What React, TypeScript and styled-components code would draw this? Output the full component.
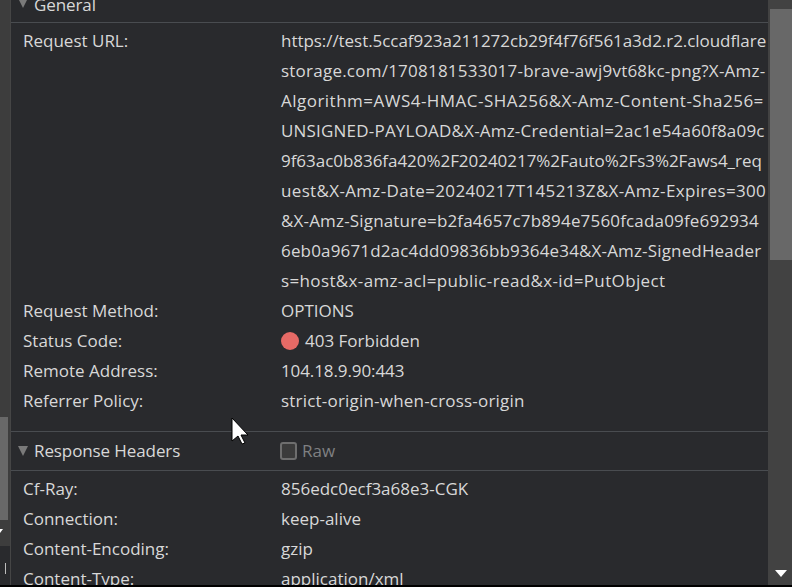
import React from 'react';
import styled, { createGlobalStyle } from 'styled-components';

const GlobalStyle = createGlobalStyle`
  html, body {
    margin: 0;
    padding: 0;
    width: 792px;
    height: 587px;
    overflow: hidden;
    background: #000;
  }
  * {
    box-sizing: border-box;
  }
`;

const Page = styled.div`
  width: 792px;
  height: 585px;
  display: flex;
  overflow: hidden;
  position: relative;
  font-family: 'Open Sans', 'Noto Sans', sans-serif;
  font-size: 17px;
  color: #d8d8d8;
`;

const SideRail = styled.div`
  width: 11px;
  background: #3d3d3d;
  flex: none;
  display: flex;
  flex-direction: column;
  padding-top: 417px;
  border-right: 1px solid #454545;
`;

const SideThumb = styled.div`
  width: 8px;
  height: 103px;
  background: #686868;
`;

const SideArrow = styled.svg`
  display: block;
  margin: 9px 0 0 -3px;
`;

const SideFoot = styled.div`
  flex: 1;
  margin-top: 13px;
  background: #292a2d;
  display: flex;
  align-items: flex-end;
  justify-content: center;
  padding-bottom: 11px;
`;

const SideTick = styled.div`
  width: 1px;
  height: 11px;
  background: #bdbdbd;
`;

const Content = styled.div`
  flex: 1;
  min-width: 0;
  background: #292a2d;
  overflow: hidden;
`;

const SectionHeader = styled.div<{ $clipped?: boolean }>`
  height: ${({ $clipped }) => ($clipped ? 23 : 39)}px;
  display: flex;
  align-items: ${({ $clipped }) => ($clipped ? 'flex-end' : 'center')};
  border-bottom: 1px solid #494c50;
  padding: 0 0 ${({ $clipped }) => ($clipped ? 11 : 0)}px 7px;
  line-height: ${({ $clipped }) => ($clipped ? 13 : 38)}px;
`;

const Caret = styled.span<{ $clipped?: boolean }>`
  width: 0;
  height: 0;
  border-left: 5.5px solid transparent;
  border-right: 5.5px solid transparent;
  border-top: 10px solid #7a7a7a;
  margin: 0 6px ${({ $clipped }) => ($clipped ? 3 : 0)}px 0;
  flex: none;
`;

const HeaderTitle = styled.span`
  width: 246px;
  flex: none;
  letter-spacing: -0.1px;
`;

const RawToggle = styled.span`
  display: flex;
  align-items: center;
  gap: 5px;
  color: #7f8082;
`;

const RawBox = styled.span`
  width: 17px;
  height: 18px;
  border: 2px solid #6e6e6e;
  border-radius: 3px;
  background: #3b3b3b;
`;

const Rows = styled.div<{ $pad: number }>`
  padding: 3px 0 ${({ $pad }) => $pad}px 12px;
  border-bottom: 1px solid #494c50;
`;

const Row = styled.div`
  display: flex;
  line-height: 30px;
`;

const Label = styled.div`
  width: 258px;
  flex: none;
`;

const Value = styled.div<{ $tracking?: number }>`
  flex: none;
  white-space: nowrap;
  display: flex;
  align-items: center;
  gap: 6px;
  letter-spacing: ${({ $tracking }) => $tracking ?? 0}px;
`;

const ValueLines = styled.div`
  flex: none;
`;

const StatusDot = styled.span`
  width: 18px;
  height: 18px;
  border-radius: 50%;
  background: #e66a66;
  flex: none;
`;

const ScrollBar = styled.div`
  width: 24px;
  flex: none;
  background: #424242;
  display: flex;
  flex-direction: column;
  align-items: flex-end;
  position: relative;
`;

const ScrollThumb = styled.div`
  width: 22px;
  height: 251px;
  margin-top: 9px;
  background: #686868;
`;

const ScrollArrow = styled.svg`
  position: absolute;
  bottom: 8px;
  left: 7px;
`;

const Pointer = styled.svg`
  position: absolute;
  left: 231px;
  top: 417px;
`;

const urlLines: [string, number][] = [
  ['https://test.5ccaf923a211272cb29f4f76f561a3d2.r2.cloudflare', -0.05],
  ['storage.com/1708181533017-brave-awj9vt68kc-png?X-Amz-', 0.23],
  ['Algorithm=AWS4-HMAC-SHA256&X-Amz-Content-Sha256=', 0.48],
  ['UNSIGNED-PAYLOAD&X-Amz-Credential=2ac1e54a60f8a09c', 0.2],
  ['9f63ac0b836fa420%2F20240217%2Fauto%2Fs3%2Faws4_req', -0.04],
  ['uest&X-Amz-Date=20240217T145213Z&X-Amz-Expires=300', 0.34],
  ['&X-Amz-Signature=b2fa4657c7b894e7560fcada09fe692934', 0.17],
  ['6eb0a9671d2ac4dd09836bb9364e34&X-Amz-SignedHeader', 0.16],
  ['s=host&x-amz-acl=public-read&x-id=PutObject', 0.36],
];

const responseRows = [
  ['Cf-Ray:', '856edc0ecf3a68e3-CGK'],
  ['Connection:', 'keep-alive'],
  ['Content-Encoding:', 'gzip'],
  ['Content-Type:', 'application/xml'],
];

export default function App() {
  return (
    <>
      <GlobalStyle />
      <Page>
        <SideRail>
          <SideThumb />
          <SideArrow width="6" height="4" viewBox="0 0 6 4">
            <path d="M0 0h6L3 4z" fill="#fff" />
          </SideArrow>
          <SideFoot>
            <SideTick />
          </SideFoot>
        </SideRail>
        <Content>
          <SectionHeader $clipped>
            <Caret $clipped />
            <HeaderTitle>General</HeaderTitle>
          </SectionHeader>
          <Rows $pad={15}>
            <Row>
              <Label>Request URL:</Label>
              <ValueLines>
                {urlLines.map(([line, tracking]) => (
                  <Value key={line} $tracking={tracking}>
                    {line}
                  </Value>
                ))}
              </ValueLines>
            </Row>
            <Row>
              <Label>Request Method:</Label>
              <Value>OPTIONS</Value>
            </Row>
            <Row>
              <Label>Status Code:</Label>
              <Value>
                <StatusDot />
                403 Forbidden
              </Value>
            </Row>
            <Row>
              <Label>Remote Address:</Label>
              <Value $tracking={-0.1}>104.18.9.90:443</Value>
            </Row>
            <Row>
              <Label>Referrer Policy:</Label>
              <Value $tracking={0.2}>strict-origin-when-cross-origin</Value>
            </Row>
          </Rows>
          <SectionHeader>
            <Caret />
            <HeaderTitle>Response Headers</HeaderTitle>
            <RawToggle>
              <RawBox />
              Raw
            </RawToggle>
          </SectionHeader>
          <Rows $pad={0}>
            {responseRows.map(([name, value]) => (
              <Row key={name}>
                <Label>{name}</Label>
                <Value>{value}</Value>
              </Row>
            ))}
          </Rows>
        </Content>
        <ScrollBar>
          <ScrollThumb />
          <ScrollArrow width="12" height="7" viewBox="0 0 12 7">
            <path d="M0 0h12L6 7z" fill="#fff" />
          </ScrollArrow>
        </ScrollBar>
        <Pointer width="18" height="28" viewBox="0 0 18 28">
          <path d="M1 1v23l6-5 4 8 3-1-4-8h7z" fill="#fff" stroke="#000" strokeWidth="1" />
        </Pointer>
      </Page>
    </>
  );
}
